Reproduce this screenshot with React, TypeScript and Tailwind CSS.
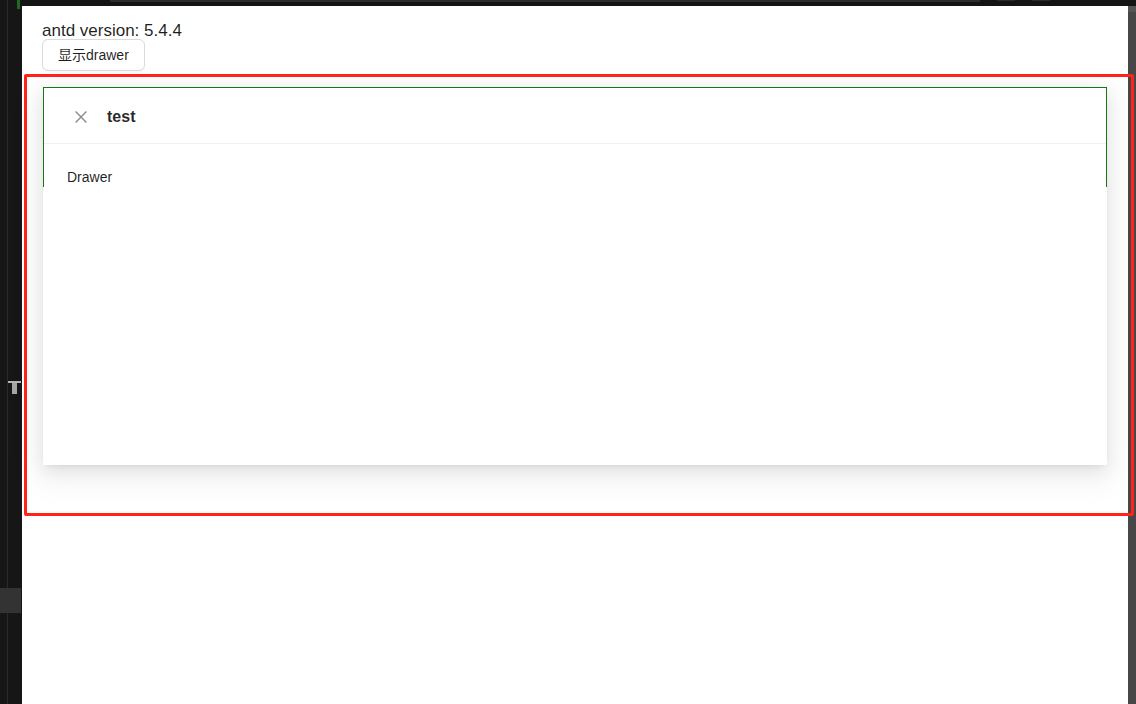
export default function App() {
  return (
    <div
      className="relative flex h-[704px] w-[1136px] overflow-hidden bg-white"
      style={{ fontFamily: '"Liberation Sans", "Noto Sans CJK SC", sans-serif' }}
    >
      {/* editor gutter on the left */}
      <div className="flex h-full w-[22px] shrink-0 bg-[#161616]">
        <div className="w-[7px] shrink-0" />
        <div className="w-px shrink-0 bg-[#2a2a2a]" />
        <div className="flex flex-1 flex-col">
          <div className="ml-[9px] h-[9px] w-[3px] bg-[#1d6b1d]" />
          <div className="mt-[372px] flex flex-col items-start">
            <div className="ml-0 h-[2px] w-[13px] bg-[#b4b4b4]" />
            <div className="ml-[4px] h-[11px] w-[5px] bg-[#a6a6a6]" />
          </div>
        </div>
      </div>

      <div className="flex min-w-0 flex-1 flex-col">
        {/* top strip */}
        <div className="flex h-[6px] shrink-0 items-start gap-[17px] bg-[#141414] pl-[88px]">
          <div className="h-[2px] w-[870px] bg-[#2d2d2d]" />
          <div className="h-px w-[18px] bg-[#2a2a2a]" />
          <div className="h-px w-[18px] bg-[#2a2a2a]" />
        </div>

        <div className="flex min-h-0 flex-1">
          {/* page */}
          <div className="min-w-0 flex-1 bg-white pt-[14px] text-[rgba(0,0,0,0.88)]">
            <div className="pl-[20px] text-[17px] leading-[22px]">antd version: 5.4.4</div>
            <div className="pl-[20px]">
              <button className="mt-[-3px] h-[32px] rounded-[6px] border border-[#d9d9d9] bg-white px-[15px] text-[14px] leading-[22px] text-[rgba(0,0,0,0.88)] shadow-[0_2px_0_rgba(0,0,0,0.02)]">
                显示drawer
              </button>
            </div>

            {/* drawer panel */}
            <div className="relative ml-[21px] mt-[16px] h-[378px] w-[1064px] bg-white shadow-[0_6px_16px_0_rgba(0,0,0,0.08),0_3px_6px_-4px_rgba(0,0,0,0.12),0_9px_28px_8px_rgba(0,0,0,0.05)]">
              <div className="flex h-[57px] items-center gap-[20px] border-b border-[#f0f0f0] pl-[32px] pt-[3px]">
                <svg width="12" height="12" viewBox="0 0 12 12">
                  <path d="M0.6 0.6 L11.4 11.4 M11.4 0.6 L0.6 11.4" stroke="#8c8c8c" strokeWidth="1.4" fill="none" />
                </svg>
                <span className="text-[16px] font-bold leading-[24px] text-[rgba(0,0,0,0.85)]">test</span>
              </div>
              <div className="pl-[24px] pt-[22px] text-[14px] leading-[22px]">Drawer</div>

              {/* green outline of the wrapper */}
              <div className="pointer-events-none absolute inset-x-0 top-0 h-[100px] border border-b-0 border-[#137a13]" />
            </div>
          </div>

          {/* scrollbar strip */}
          <div className="w-[8px] shrink-0 bg-[#474747]">
            <div className="h-[6px] bg-[#555555]" />
          </div>
        </div>
      </div>

      {/* gutter block */}
      <div className="pointer-events-none absolute left-0 top-[588px] h-[25px] w-[21px] bg-[#333333]" />

      {/* red annotation frame */}
      <div className="pointer-events-none absolute left-[24px] top-[74px] h-[442px] w-[1110px] rounded-[2px] border-[3px] border-[#ff2417]" />
    </div>
  );
}
